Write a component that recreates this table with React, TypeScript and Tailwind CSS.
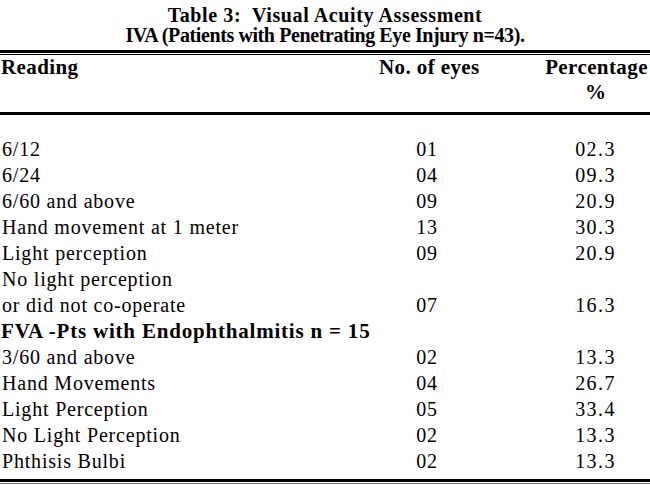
type Row = { label: string[]; eyes?: string; pct?: string; bold?: boolean };

const rows: Row[] = [
  { label: ["6/12"], eyes: "01", pct: "02.3" },
  { label: ["6/24"], eyes: "04", pct: "09.3" },
  { label: ["6/60 and above"], eyes: "09", pct: "20.9" },
  { label: ["Hand movement at 1 meter"], eyes: "13", pct: "30.3" },
  { label: ["Light perception"], eyes: "09", pct: "20.9" },
  { label: ["No light perception", "or did not co-operate"], eyes: "07", pct: "16.3" },
  { label: ["FVA -Pts with Endophthalmitis n = 15"], bold: true },
  { label: ["3/60 and above"], eyes: "02", pct: "13.3" },
  { label: ["Hand Movements"], eyes: "04", pct: "26.7" },
  { label: ["Light Perception"], eyes: "05", pct: "33.4" },
  { label: ["No Light Perception"], eyes: "02", pct: "13.3" },
  { label: ["Phthisis Bulbi"], eyes: "02", pct: "13.3" },
];

export default function App() {
  return (
    <div className="w-[650px] h-[491px] overflow-hidden bg-white text-black font-['Liberation_Serif','Times_New_Roman',serif]">
      {/* Caption */}
      <div className="pt-[5px] text-center font-bold text-[20px] leading-[20px]">
        <div className="tracking-[0.6px] whitespace-pre">Table 3:  Visual Acuity Assessment</div>
        <div className="tracking-[-0.4px]">IVA (Patients with Penetrating Eye Injury n=43).</div>
      </div>

      {/* Top double rule */}
      <div className="mt-[5px] h-[3px] bg-black" />
      <div className="mt-[1px] h-[1px] bg-black" />

      {/* Column headers */}
      <div className="grid grid-cols-[379px_166px_1fr] pb-[7px] font-bold text-[21px] leading-[25px] tracking-[0.4px]">
        <div className="pl-[1px]">Reading</div>
        <div>No. of eyes</div>
        <div className="text-center pr-[2px]">
          <div>Percentage</div>
          <div className="tracking-[2px]">%</div>
        </div>
      </div>

      <div className="h-[3px] bg-black" />

      {/* Body */}
      <div className="pt-[21px] pb-[5px] text-[20px] leading-[26px] tracking-[0.8px]">
        {rows.map((r, i) => (
          <div key={i} className="grid grid-cols-[379px_166px_1fr] items-end">
            <div className={r.bold ? "pl-[1px] font-bold text-[21px] tracking-[0.8px] whitespace-nowrap" : "pl-[2px]"}>
              {r.label.map((l, j) => (
                <div key={j}>{l}</div>
              ))}
            </div>
            <div className="w-[96px] text-center">{r.eyes}</div>
            <div className="text-center pr-[4px] tracking-[1.4px]">{r.pct}</div>
          </div>
        ))}
      </div>

      {/* Bottom rule */}
      <div className="h-[3px] bg-black" />
      <div className="mt-[1px] h-[1px] bg-gray-500" />
    </div>
  );
}
